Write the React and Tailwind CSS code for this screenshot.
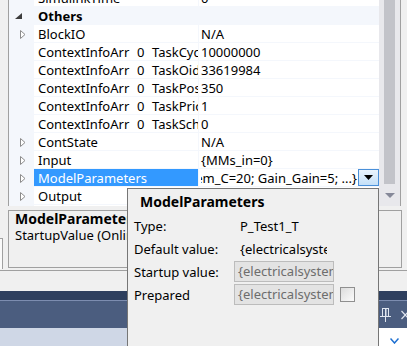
import React from "react";

const Collapsed = () => (
  <svg width="6" height="9" viewBox="0 0 6 9" className="ml-[11px] shrink-0">
    <path d="M0.5 0.5 L5 4.5 L0.5 8.5 Z" fill="#ffffff" stroke="#8c8c8c" strokeWidth="1" />
  </svg>
);

const Expanded = () => (
  <svg width="7" height="6" viewBox="0 0 7 6" className="ml-[6px] shrink-0">
    <path d="M7 0 L7 6 L0 6 Z" fill="#3d3d3d" />
  </svg>
);

const rows = [
  { name: "SimulinkTime", value: "0" },
  { category: "Others" },
  { name: "BlockIO", value: "N/A", exp: true },
  { ctx: "TaskCycleTime", value: "10000000" },
  { ctx: "TaskOid", value: "33619984" },
  { ctx: "TaskPosition", value: "350" },
  { ctx: "TaskPriority", value: "1" },
  { ctx: "TaskScheduling", value: "0" },
  { name: "ContState", value: "N/A", exp: true },
  { name: "Input", value: "{MMs_in=0}", exp: true },
  { name: "ModelParameters", selected: true, exp: true },
  { name: "Output", value: "{...}", exp: true },
  { name: "SimTime", value: "0" },
];

function Row({ r }) {
  if (r.category) {
    return (
      <div className="flex h-[18px] items-center bg-[#f4f7fc]">
        <div className="w-[25px] flex items-center">
          <Expanded />
        </div>
        <div className="pl-[4px] font-bold leading-[16px]">{r.category}</div>
      </div>
    );
  }
  return (
    <div className="flex h-[18px]">
      <div className="w-[25px] h-[18px] bg-[#f4f7fc] flex items-center">{r.exp ? <Collapsed /> : null}</div>
      <div
        className={
          "w-[164px] h-[18px] border-b border-[#f4f7fc] pl-[4px] flex items-center overflow-hidden whitespace-nowrap leading-[16px] " +
          (r.selected ? "bg-[#3399ff] text-white" : "bg-white")
        }
      >
        {r.ctx ? (
          <>
            <span className="w-[99px] shrink-0">ContextInfoArr</span>
            <span className="w-[15px] shrink-0">0</span>
            <span className="shrink-0">{r.ctx}</span>
          </>
        ) : (
          r.name
        )}
      </div>
      <div className="w-px h-[18px] bg-[#f4f7fc]" />
      {r.selected ? (
        <div className="w-[180px] h-[18px] border-b border-[#f4f7fc] flex items-stretch bg-white">
          <div className="flex-1 ml-[2px] overflow-hidden flex justify-end items-center whitespace-nowrap leading-[16px] pr-[1px]">
            {"{electricalsystem_C=20; Gain_Gain=5; ...}"}
          </div>
          <div className="w-[21px] h-[17px] border border-[#4a90d9] bg-[linear-gradient(#eaf4fd,#c4e0f8)] flex items-center justify-center">
            <svg width="9" height="5" viewBox="0 0 9 5">
              <path d="M0 0 L9 0 L4.5 5 Z" fill="#000" />
            </svg>
          </div>
        </div>
      ) : (
        <div className="w-[180px] h-[18px] border-b border-[#f4f7fc] pl-[2px] flex items-center overflow-hidden whitespace-nowrap leading-[16px] bg-white">
          {r.value}
        </div>
      )}
    </div>
  );
}

export default function App() {
  return (
    <div className="relative w-[407px] h-[346px] overflow-hidden bg-[#f0f0f0] text-[13px] text-black font-['Noto_Sans',sans-serif]">
      {/* top area */}
      <div className="flex h-[270px]">
        <div className="w-[8px] flex flex-col">
          <div className="h-[238px]" />
          <div className="w-[3px] h-[31px] border-t border-r border-[#a0a0a0] bg-[#fafafa]" />
        </div>
        <div className="w-[394px] flex flex-col">
          <div className="h-[206px] w-[393px] border-l border-r border-[#a0a0a0] flex overflow-hidden bg-white">
            <div className="w-[370px] overflow-hidden">
              <div className="-mt-[11px] flex flex-col">
                {rows.map((r, i) => (
                  <Row key={i} r={r} />
                ))}
              </div>
            </div>
            <div className="w-[21px] bg-[#e8e8ec] flex flex-col">
              <div className="ml-[5px] w-[11px] h-[184px] bg-[#c2c3c9]" />
              <div className="flex justify-center mt-[9px]">
                <svg width="10" height="5" viewBox="0 0 10 5">
                  <path d="M0 0 L10 0 L5 5 Z" fill="#868999" />
                </svg>
              </div>
            </div>
          </div>
          <div className="mt-[4px] h-[58px] w-[394px] border border-[#a0a0a0] pl-[6px] overflow-hidden">
            <div className="-mt-[1px] leading-[17px] text-[14px] font-bold whitespace-nowrap">ModelParameters</div>
            <div className="leading-[16px] whitespace-nowrap">StartupValue (Online value of the parameter)</div>
          </div>
        </div>
      </div>
      <div className="h-px bg-[#a0a0a0]" />
      <div className="h-[20px] bg-[#f0f0f0]" />
      <div className="h-[9px] bg-[#2e3f5e]" />
      <div className="h-px bg-[#7d8db0]" />
      <div className="h-[27px] bg-[#4b5d7f] flex justify-end items-center overflow-hidden">
        <svg width="14" height="14" viewBox="0 0 14 14" className="mr-[8px] shrink-0">
          <rect x="3.5" y="0.5" width="6" height="8" fill="none" stroke="#dfe5ef" strokeWidth="1" />
          <rect x="6" y="1" width="1.5" height="7" fill="#dfe5ef" />
          <line x1="1" y1="8.5" x2="12" y2="8.5" stroke="#dfe5ef" strokeWidth="1" />
          <line x1="6.5" y1="9" x2="6.5" y2="14" stroke="#dfe5ef" strokeWidth="1" />
        </svg>
        <svg width="6" height="10" viewBox="0 0 6 10" className="shrink-0">
          <path d="M0.5 1 L8 9 M8 1 L0.5 9" stroke="#dfe5ef" strokeWidth="1.2" fill="none" />
        </svg>
      </div>
      <div className="h-[18px] flex">
        <div className="flex-1 bg-[#cfd7e6]" />
        <div className="w-[28px] bg-white flex items-end justify-center pb-[2px]">
          <svg width="9" height="6" viewBox="0 0 9 6" className="ml-[3px]">
            <path d="M0.5 0.5 L4.5 5 L8.5 0.5" stroke="#1c6fd1" strokeWidth="1.5" fill="none" />
          </svg>
        </div>
      </div>

      {/* tooltip popup */}
      <div className="absolute left-[127px] top-[188px] w-[252px] h-[170px] border border-[#767676] bg-[#f0f0f0]">
        <div className="h-[25px] flex items-center pl-[12px] text-[14px] font-bold leading-[17px]">ModelParameters</div>
        <div className="grid grid-cols-[106px_1fr]">
          <div className="h-[23px] flex items-center pl-[6px] leading-[16px]">Type:</div>
          <div className="h-[23px] flex items-center pl-[6px] leading-[16px]">P_Test1_T</div>
          <div className="h-[23px] flex items-center pl-[6px] leading-[16px]">Default value:</div>
          <div className="h-[23px] flex items-center pl-[6px] leading-[16px]">
            <div className="w-[87px] overflow-hidden whitespace-nowrap">{"{electricalsystem_C=20; Gain_Gain=5; ...}"}</div>
          </div>
          <div className="h-[23px] flex items-center pl-[6px] leading-[16px]">Startup value:</div>
          <div className="h-[23px] flex items-center">
            <div className="w-[100px] h-[21px] border border-[#bcbcbc] bg-[#e3e3e3] text-[#6d6d6d] pl-[3px] overflow-hidden whitespace-nowrap leading-[19px]">
              {"{electricalsystem_C=20; Gain_Gain=5; ...}"}
            </div>
          </div>
          <div className="h-[23px] flex items-center pl-[6px] leading-[16px]">Prepared</div>
          <div className="h-[23px] flex items-center">
            <div className="w-[100px] h-[21px] border border-[#bcbcbc] bg-[#e3e3e3] text-[#6d6d6d] pl-[3px] overflow-hidden whitespace-nowrap leading-[19px]">
              {"{electricalsystem_C=20; Gain_Gain=5; ...}"}
            </div>
            <div className="ml-[6px] w-[15px] h-[15px] border border-[#8f8f8f] bg-[linear-gradient(135deg,#dcdcdc,#fbfbfb)]" />
          </div>
        </div>
      </div>
    </div>
  );
}
